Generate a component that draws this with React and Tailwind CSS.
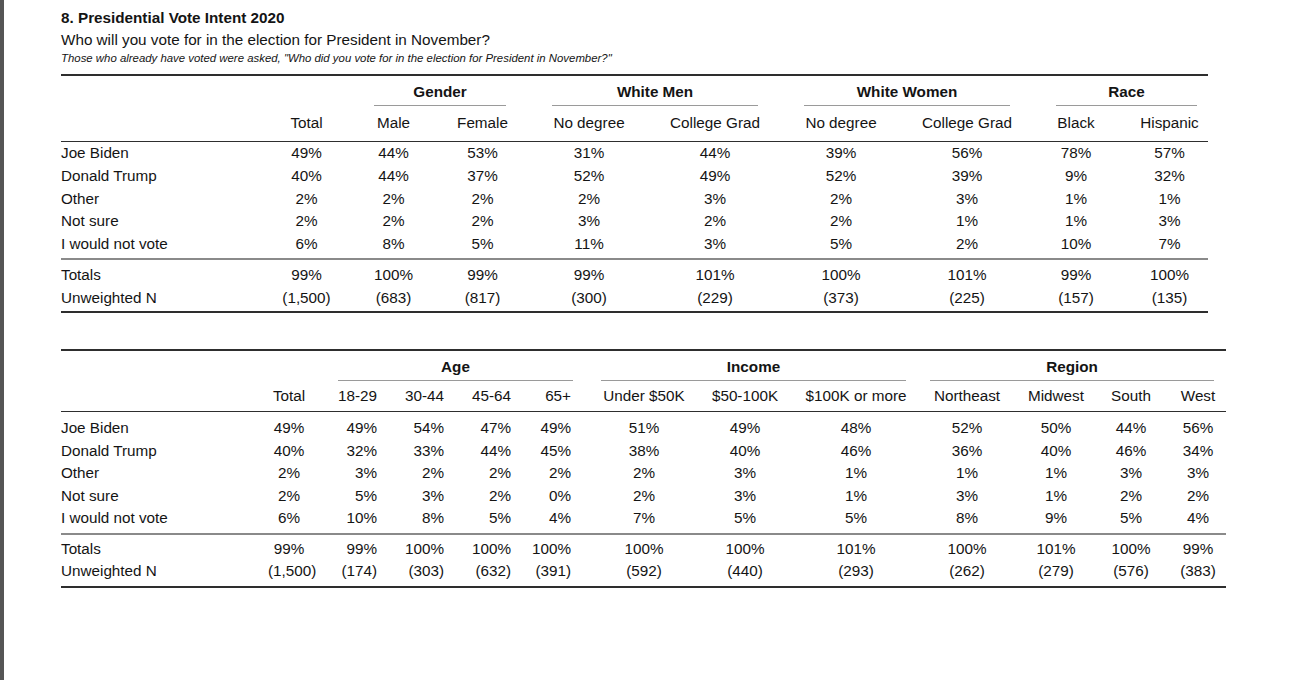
import React from 'react';

// ── Table 1 data
const t1Groups = [
  { label: 'Gender', span: 'col-span-2', line: 'mx-[23px]' },
  { label: 'White Men', span: 'col-span-2', line: 'mx-[23px]' },
  { label: 'White Women', span: 'col-span-2', line: 'mx-[23px]' },
  { label: 'Race', span: 'col-span-2', line: 'mx-[23px]' },
];
const t1Cols = ['Total', 'Male', 'Female', 'No degree', 'College Grad', 'No degree', 'College Grad', 'Black', 'Hispanic'];
const t1Align = Array(9).fill('text-center');
const t1Rows = [
  ['Joe Biden', '49%', '44%', '53%', '31%', '44%', '39%', '56%', '78%', '57%'],
  ['Donald Trump', '40%', '44%', '37%', '52%', '49%', '52%', '39%', '9%', '32%'],
  ['Other', '2%', '2%', '2%', '2%', '3%', '2%', '3%', '1%', '1%'],
  ['Not sure', '2%', '2%', '2%', '3%', '2%', '2%', '1%', '1%', '3%'],
  ['I would not vote', '6%', '8%', '5%', '11%', '3%', '5%', '2%', '10%', '7%'],
];
const t1Totals = [
  ['Totals', '99%', '100%', '99%', '99%', '101%', '100%', '101%', '99%', '100%'],
  ['Unweighted N', '(1,500)', '(683)', '(817)', '(300)', '(229)', '(373)', '(225)', '(157)', '(135)'],
];

// ── Table 2 data
const t2Groups = [
  { label: 'Age', span: 'col-span-4', line: 'ml-[28px] mr-[20px]' },
  { label: 'Income', span: 'col-span-3', line: 'ml-[8px] mr-[17px]' },
  { label: 'Region', span: 'col-span-4', line: 'ml-[7px] mr-[21px]' },
];
const t2Cols = ['Total', '18-29', '30-44', '45-64', '65+', 'Under $50K', '$50-100K', '$100K or more', 'Northeast', 'Midwest', 'South', 'West'];
const t2Align = [
  'text-center pl-[28px]',
  'text-right pr-[5px]',
  'text-right pr-[5px]',
  'text-right pr-[5px]',
  'text-right pr-[22px]',
  'text-center',
  'text-center',
  'text-center pr-[6px]',
  'text-center',
  'text-center',
  'text-center',
  'text-center',
];
const t2Rows = [
  ['Joe Biden', '49%', '49%', '54%', '47%', '49%', '51%', '49%', '48%', '52%', '50%', '44%', '56%'],
  ['Donald Trump', '40%', '32%', '33%', '44%', '45%', '38%', '40%', '46%', '36%', '40%', '46%', '34%'],
  ['Other', '2%', '3%', '2%', '2%', '2%', '2%', '3%', '1%', '1%', '1%', '3%', '3%'],
  ['Not sure', '2%', '5%', '3%', '2%', '0%', '2%', '3%', '1%', '3%', '1%', '2%', '2%'],
  ['I would not vote', '6%', '10%', '8%', '5%', '4%', '7%', '5%', '5%', '8%', '9%', '5%', '4%'],
];
const t2Totals = [
  ['Totals', '99%', '99%', '100%', '100%', '100%', '100%', '100%', '101%', '100%', '101%', '100%', '99%'],
  ['Unweighted N', '(1,500)', '(174)', '(303)', '(632)', '(391)', '(592)', '(440)', '(293)', '(262)', '(279)', '(576)', '(383)'],
];

function Row({ cells, grid, align, h }) {
  return (
    <div className={`grid ${grid} ${h} items-center whitespace-nowrap`}>
      {cells.map((c, i) => (
        <div key={i} className={i === 0 ? 'text-left' : align[i - 1]}>{c}</div>
      ))}
    </div>
  );
}

function CrossTab({ width, grid, lead, groups, cols, align, rows, totals, headH, rowH, bodyPad, totPad }) {
  return (
    <div className={`${width} border-t-2 border-b-2 border-[#2e2e2e]`}>
      {/* group labels with their underlines */}
      <div className={`grid ${grid} whitespace-nowrap`}>
        <div className={lead} />
        {groups.map(g => (
          <div key={g.label} className={g.span}>
            <div className={`${g.line} pt-[7px] pb-[4px] leading-[18px] text-center font-bold border-b border-[#9a9a9a]`}>
              {g.label}
            </div>
          </div>
        ))}
      </div>

      {/* column headers */}
      <div className="border-b border-[#2e2e2e]">
        <Row cells={['', ...cols]} grid={grid} align={align} h={headH} />
      </div>

      {/* body */}
      <div className={`${bodyPad} border-b-2 border-[#8a8a8a]`}>
        {rows.map(r => <Row key={r[0]} cells={r} grid={grid} align={align} h={rowH} />)}
      </div>

      {/* totals */}
      <div className={totPad}>
        {totals.map(r => <Row key={r[0]} cells={r} grid={grid} align={align} h={rowH} />)}
      </div>
    </div>
  );
}

export default function App() {
  return (
    <div className="flex h-[680px] w-[1290px] overflow-hidden bg-white text-[#141414] font-['Liberation_Sans',Arial,sans-serif] text-[15.25px]">
      <div className="w-[4px] shrink-0 bg-[#555555]" />

      <div className="pl-[57px] pt-[8px]">
        <div className="font-bold leading-[20px]">8. Presidential Vote Intent 2020</div>
        <div className="mt-[1px] leading-[22px]">Who will you vote for in the election for President in November?</div>
        <div className="italic text-[11.4px] leading-[14px]">
          Those who already have voted were asked, "Who did you vote for in the election for President in November?"
        </div>

        <div className="mt-[9px]">
          <CrossTab
            width="w-[1147px]"
            grid="grid-cols-[201px_89px_85px_93px_120px_132px_120px_132px_86px_101px]"
            lead="col-span-2"
            groups={t1Groups}
            cols={t1Cols}
            align={t1Align}
            rows={t1Rows}
            totals={t1Totals}
            headH="h-[35px]"
            rowH="h-[22.75px]"
            bodyPad="pb-[2px]"
            totPad="pt-[4px] pb-[2px]"
          />
        </div>

        <div className="mt-[36px]">
          <CrossTab
            width="w-[1165px]"
            grid="grid-cols-[179px_70px_72px_67px_67px_77px_102px_100px_128px_88px_90px_60px_74px]"
            lead="col-span-2"
            groups={t2Groups}
            cols={t2Cols}
            align={t2Align}
            rows={t2Rows}
            totals={t2Totals}
            headH="h-[30px]"
            rowH="h-[22.5px]"
            bodyPad="pt-[5px] pb-[3px]"
            totPad="pt-[3px] pb-[3px]"
          />
        </div>
      </div>
    </div>
  );
}
